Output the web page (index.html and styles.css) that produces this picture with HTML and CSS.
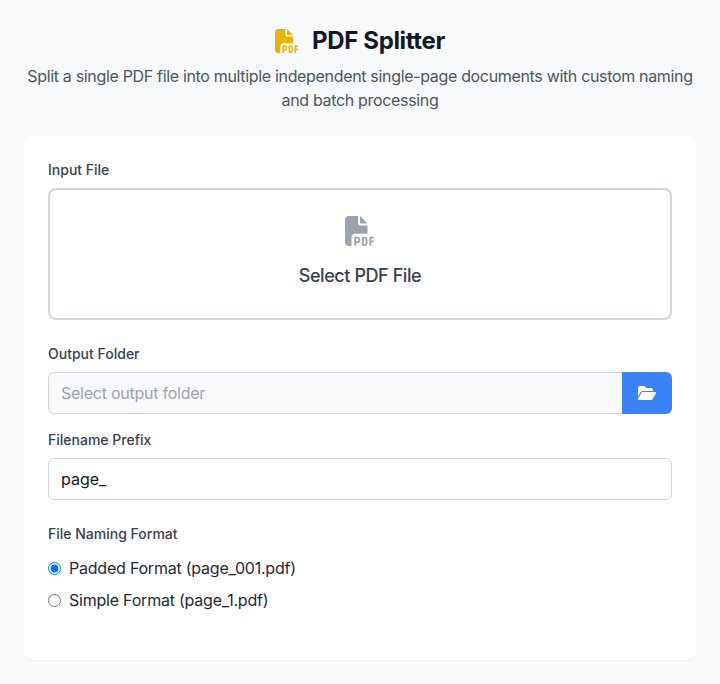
FILE: index.html
```html
<!DOCTYPE html>
<html lang="en">
<head>
    <meta charset="UTF-8">
    <meta name="viewport" content="width=device-width, initial-scale=1.0">
    <title>PDF Splitter</title>
    <link rel="stylesheet" href="styles.css">
</head>
<body>
    <header class="header">
        <h1 class="title">
            <svg class="title-icon" viewBox="0 0 512 512"><path d="M0 64C0 28.7 28.7 0 64 0L224 0l0 128c0 17.7 14.3 32 32 32l128 0 0 144-208 0c-35.3 0-64 28.7-64 64l0 144-48 0c-35.3 0-64-28.7-64-64L0 64zm384 64l-128 0L256 0 384 128zM176 352l32 0c30.9 0 56 25.1 56 56s-25.1 56-56 56l-16 0 0 32c0 8.8-7.2 16-16 16s-16-7.2-16-16l0-48 0-80c0-8.8 7.2-16 16-16zm32 80c13.3 0 24-10.7 24-24s-10.7-24-24-24l-16 0 0 48 16 0zm96-80l32 0c26.5 0 48 21.5 48 48l0 64c0 26.5-21.5 48-48 48l-32 0c-8.8 0-16-7.2-16-16l0-128c0-8.8 7.2-16 16-16zm32 128c8.8 0 16-7.2 16-16l0-64c0-8.8-7.2-16-16-16l-16 0 0 96 16 0zm80-112c0-8.8 7.2-16 16-16l48 0c8.8 0 16 7.2 16 16s-7.2 16-16 16l-32 0 0 32 32 0c8.8 0 16 7.2 16 16s-7.2 16-16 16l-32 0 0 48c0 8.8-7.2 16-16 16s-16-7.2-16-16l0-64 0-64z"/></svg>
            PDF Splitter
        </h1>
        <p class="subtitle">Split a single PDF file into multiple independent single-page documents with custom naming and batch processing</p>
    </header>

    <main class="card">
        <div class="field field-large">
            <label class="label">Input File</label>
            <button class="dropzone" type="button">
                <svg class="dropzone-icon" viewBox="0 0 512 512"><path d="M0 64C0 28.7 28.7 0 64 0L224 0l0 128c0 17.7 14.3 32 32 32l128 0 0 144-208 0c-35.3 0-64 28.7-64 64l0 144-48 0c-35.3 0-64-28.7-64-64L0 64zm384 64l-128 0L256 0 384 128zM176 352l32 0c30.9 0 56 25.1 56 56s-25.1 56-56 56l-16 0 0 32c0 8.8-7.2 16-16 16s-16-7.2-16-16l0-48 0-80c0-8.8 7.2-16 16-16zm32 80c13.3 0 24-10.7 24-24s-10.7-24-24-24l-16 0 0 48 16 0zm96-80l32 0c26.5 0 48 21.5 48 48l0 64c0 26.5-21.5 48-48 48l-32 0c-8.8 0-16-7.2-16-16l0-128c0-8.8 7.2-16 16-16zm32 128c8.8 0 16-7.2 16-16l0-64c0-8.8-7.2-16-16-16l-16 0 0 96 16 0zm80-112c0-8.8 7.2-16 16-16l48 0c8.8 0 16 7.2 16 16s-7.2 16-16 16l-32 0 0 32 32 0c8.8 0 16 7.2 16 16s-7.2 16-16 16l-32 0 0 48c0 8.8-7.2 16-16 16s-16-7.2-16-16l0-64 0-64z"/></svg>
                <span>Select PDF File</span>
            </button>
        </div>

        <div class="field">
            <label class="label">Output Folder</label>
            <div class="input-group">
                <input class="input input-readonly" type="text" placeholder="Select output folder" readonly>
                <button class="folder-button" type="button">
                    <svg class="folder-icon" viewBox="0 0 576 512"><path d="M88.7 223.8L0 375.8 0 96C0 60.7 28.7 32 64 32l117.5 0c17 0 33.3 6.7 45.3 18.7l26.5 26.5c12 12 28.3 18.7 45.3 18.7L416 96c35.3 0 64 28.7 64 64l0 32-336 0c-22.8 0-43.8 12.1-55.3 31.8zm27.6 16.1C122.1 230 132.6 224 144 224l400 0c11.5 0 22 6.1 27.7 16.1s5.7 22.2-.1 32.1l-112 192C453.9 474 443.4 480 432 480L32 480c-11.5 0-22-6.1-27.7-16.1s-5.7-22.2 .1-32.1l112-192z"/></svg>
                </button>
            </div>
        </div>

        <div class="field field-large">
            <label class="label">Filename Prefix</label>
            <input class="input" type="text" value="page_">
        </div>

        <div class="field">
            <span class="label">File Naming Format</span>
            <div class="radio-group">
                <label class="radio"><input type="radio" name="format" checked> Padded Format (page_001.pdf)</label>
                <label class="radio"><input type="radio" name="format"> Simple Format (page_1.pdf)</label>
            </div>
        </div>
    </main>
</body>
</html>
```

FILE: styles.css
```css
* {
    box-sizing: border-box;
}

body {
    margin: 0;
    padding: 24px;
    font-family: Inter, "Liberation Sans", sans-serif;
    background-color: #f9fafb;
    color: #111827;
}

.header {
    text-align: center;
    margin-bottom: 24px;
}

.title {
    display: flex;
    justify-content: center;
    align-items: center;
    gap: 13px;
    margin: 0 0 8px;
    padding-top: 1px;
    height: 32px;
    font-size: 24px;
    line-height: 32px;
    font-weight: 700;
    letter-spacing: -0.35px;
}

.title-icon {
    width: 24px;
    height: 24px;
    fill: #eab308;
}

.subtitle {
    margin: 0;
    font-size: 16px;
    line-height: 24px;
    letter-spacing: -0.33px;
    color: #4b5563;
}

.card {
    background-color: #ffffff;
    padding: 24px 24px 48px;
    border-radius: 8px;
    box-shadow: 0 1px 2px rgba(0, 0, 0, 0.05);
}

.field {
    margin-bottom: 16px;
}

.field-large {
    margin-bottom: 24px;
}

.field:last-child {
    margin-bottom: 0;
}

.label {
    display: block;
    margin-bottom: 8px;
    font-size: 14px;
    line-height: 20px;
    font-weight: 500;
    color: #374151;
}

.dropzone {
    display: flex;
    flex-direction: column;
    align-items: center;
    justify-content: center;
    gap: 16px;
    width: 100%;
    height: 132px;
    padding: 0 0 2px;
    background-color: #ffffff;
    border: 2px solid #d1d5db;
    border-radius: 8px;
    font-family: inherit;
    font-size: 18px;
    line-height: 28px;
    font-weight: 500;
    letter-spacing: -0.42px;
    color: #374151;
}

.dropzone-icon {
    width: 30px;
    height: 30px;
    fill: #9ca3af;
}

.input-group {
    display: flex;
}

.input {
    display: block;
    width: 100%;
    height: 42px;
    padding: 8px 12px;
    background-color: #ffffff;
    border: 1px solid #d1d5db;
    border-radius: 6px;
    font-family: inherit;
    font-size: 16px;
    color: #111827;
}

.input::placeholder {
    color: #9ca3af;
    letter-spacing: -0.25px;
}

.input-readonly {
    flex: 1;
    background-color: #f9fafb;
    border-right: none;
    border-radius: 6px 0 0 6px;
}

.folder-button {
    display: flex;
    align-items: center;
    justify-content: center;
    width: 50px;
    background-color: #3b82f6;
    border: none;
    border-radius: 0 6px 6px 0;
}

.folder-icon {
    width: 18px;
    height: 16px;
    fill: #ffffff;
}

.radio-group {
    display: flex;
    flex-direction: column;
    gap: 8px;
    margin-top: 12px;
}

.radio {
    display: flex;
    align-items: center;
    gap: 8px;
    height: 24px;
    font-size: 16px;
    letter-spacing: -0.22px;
    color: #1f2937;
}

.radio input {
    margin: 0;
}
```
